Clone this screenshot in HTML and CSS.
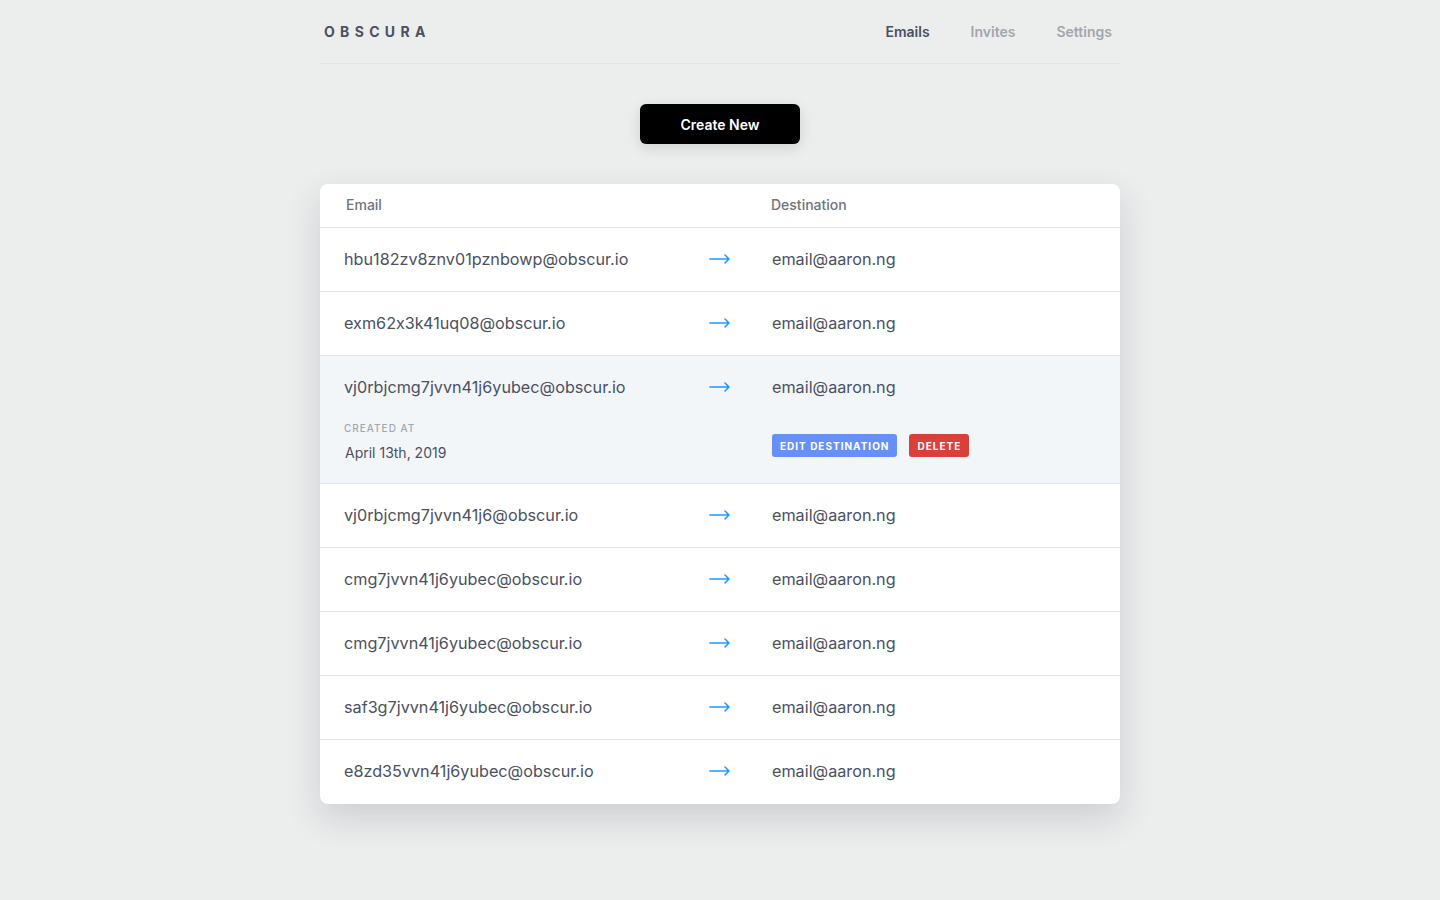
FILE: index.html
```html
<!DOCTYPE html>
<html lang="en">
<head>
    <meta charset="UTF-8">
    <meta name="viewport" content="width=device-width, initial-scale=1.0">
    <title>Obscura</title>
    <link rel="stylesheet" href="styles.css">
</head>
<body>
    <div class="container">
        <header class="header">
            <div class="logo">OBSCURA</div>
            <nav class="nav">
                <a class="nav-link active" href="#">Emails</a>
                <a class="nav-link" href="#">Invites</a>
                <a class="nav-link" href="#">Settings</a>
            </nav>
        </header>

        <div class="actions">
            <button class="create-button">Create New</button>
        </div>

        <div class="card">
            <div class="table-head">
                <div class="col-email">Email</div>
                <div class="col-arrow"></div>
                <div class="col-dest">Destination</div>
            </div>

            <div class="row">
                <div class="row-main">
                    <div class="col-email">hbu182zv8znv01pznbowp@obscur.io</div>
                    <div class="col-arrow"><svg class="arrow" viewBox="0 0 20 12"><path d="M0 6H19M15 2L19 6L15 10"/></svg></div>
                    <div class="col-dest">email@aaron.ng</div>
                </div>
            </div>
            <div class="row">
                <div class="row-main">
                    <div class="col-email">exm62x3k41uq08@obscur.io</div>
                    <div class="col-arrow"><svg class="arrow" viewBox="0 0 20 12"><path d="M0 6H19M15 2L19 6L15 10"/></svg></div>
                    <div class="col-dest">email@aaron.ng</div>
                </div>
            </div>
            <div class="row expanded">
                <div class="row-main">
                    <div class="col-email">vj0rbjcmg7jvvn41j6yubec@obscur.io</div>
                    <div class="col-arrow"><svg class="arrow" viewBox="0 0 20 12"><path d="M0 6H19M15 2L19 6L15 10"/></svg></div>
                    <div class="col-dest">email@aaron.ng</div>
                </div>
                <div class="row-details">
                    <div class="col-email">
                        <div class="detail-label">Created at</div>
                        <div class="detail-value">April 13th, 2019</div>
                    </div>
                    <div class="col-arrow"></div>
                    <div class="col-dest detail-buttons">
                        <button class="small-button edit">Edit destination</button>
                        <button class="small-button delete">Delete</button>
                    </div>
                </div>
            </div>
            <div class="row">
                <div class="row-main">
                    <div class="col-email">vj0rbjcmg7jvvn41j6@obscur.io</div>
                    <div class="col-arrow"><svg class="arrow" viewBox="0 0 20 12"><path d="M0 6H19M15 2L19 6L15 10"/></svg></div>
                    <div class="col-dest">email@aaron.ng</div>
                </div>
            </div>
            <div class="row">
                <div class="row-main">
                    <div class="col-email">cmg7jvvn41j6yubec@obscur.io</div>
                    <div class="col-arrow"><svg class="arrow" viewBox="0 0 20 12"><path d="M0 6H19M15 2L19 6L15 10"/></svg></div>
                    <div class="col-dest">email@aaron.ng</div>
                </div>
            </div>
            <div class="row">
                <div class="row-main">
                    <div class="col-email">cmg7jvvn41j6yubec@obscur.io</div>
                    <div class="col-arrow"><svg class="arrow" viewBox="0 0 20 12"><path d="M0 6H19M15 2L19 6L15 10"/></svg></div>
                    <div class="col-dest">email@aaron.ng</div>
                </div>
            </div>
            <div class="row">
                <div class="row-main">
                    <div class="col-email">saf3g7jvvn41j6yubec@obscur.io</div>
                    <div class="col-arrow"><svg class="arrow" viewBox="0 0 20 12"><path d="M0 6H19M15 2L19 6L15 10"/></svg></div>
                    <div class="col-dest">email@aaron.ng</div>
                </div>
            </div>
            <div class="row">
                <div class="row-main">
                    <div class="col-email">e8zd35vvn41j6yubec@obscur.io</div>
                    <div class="col-arrow"><svg class="arrow" viewBox="0 0 20 12"><path d="M0 6H19M15 2L19 6L15 10"/></svg></div>
                    <div class="col-dest">email@aaron.ng</div>
                </div>
            </div>
        </div>
    </div>
</body>
</html>
```

FILE: styles.css
```css
body {
    font-family: Inter, 'Noto Sans', sans-serif;
    font-feature-settings: "calt" 0;
    margin: 0;
    background-color: #eceded;
    color: #4a5160;
}
.container {
    width: 800px;
    margin: 0 auto;
    padding-bottom: 96px;
}
.header {
    display: flex;
    align-items: center;
    justify-content: space-between;
    height: 63px;
    border-bottom: 1px solid #e1e3ea;
}
.logo {
    padding-left: 4px;
    font-size: 14px;
    font-weight: 700;
    letter-spacing: 0.38em;
    color: #4a5160;
}
.nav {
    display: flex;
    gap: 41px;
    padding-right: 8px;
}
.nav-link {
    font-size: 14px;
    font-weight: 600;
    color: #a2a6ae;
    text-decoration: none;
}
.nav-link.active {
    color: #4a5160;
}
.actions {
    display: flex;
    justify-content: center;
    padding: 40px 0;
}
.create-button {
    width: 160px;
    height: 40px;
    padding-bottom: 1px;
    background-color: #000;
    color: #fff;
    border: none;
    border-radius: 6px;
    font-family: inherit;
    font-size: 14px;
    font-weight: 600;
    box-shadow: 0 4px 14px rgba(0, 0, 0, 0.12);
    cursor: pointer;
}
.card {
    background-color: #fff;
    border-radius: 8px;
    box-shadow: 0 14px 34px rgba(40, 50, 70, 0.16);
    overflow: hidden;
}
.table-head,
.row-main,
.row-details {
    display: grid;
    grid-template-columns: 356px 40px 1fr;
    padding: 0 24px;
}
.col-dest {
    padding-left: 32px;
}
.table-head {
    height: 44px;
    padding-bottom: 3px;
    box-sizing: border-box;
    align-items: center;
    font-size: 14px;
    font-weight: 500;
    color: #6e737d;
    border-bottom: 1px solid #e3e5ea;
}
.table-head .col-email {
    padding-left: 2px;
}
.table-head .col-dest {
    padding-left: 31px;
}
.row {
    border-bottom: 1px solid #e3e5ea;
    font-size: 16.2px;
}
.row:last-child {
    border-bottom: 1px solid transparent;
}
.row-main {
    height: 63px;
    padding-bottom: 2px;
    box-sizing: border-box;
    align-items: center;
}
.col-arrow {
    display: flex;
    justify-content: center;
    align-items: center;
}
.arrow {
    width: 20px;
    height: 12px;
    fill: none;
    stroke: #1a9bfa;
    stroke-width: 1.6;
    stroke-linecap: round;
    stroke-linejoin: round;
    overflow: visible;
}
.row.expanded {
    background-color: #f3f6f9;
}
.row-details {
    height: 64px;
    align-items: start;
}
.detail-label {
    font-size: 10px;
    font-weight: 500;
    letter-spacing: 0.1em;
    text-transform: uppercase;
    color: #a2a6ae;
    margin-top: 3px;
}
.detail-value {
    font-size: 14px;
    margin-top: 10px;
    padding-left: 1px;
}
.detail-buttons {
    display: flex;
    gap: 12px;
    padding-top: 15px;
}
.small-button {
    height: 23px;
    padding: 0 8px;
    border: none;
    border-radius: 3px;
    color: #fff;
    font-family: inherit;
    font-size: 10px;
    font-weight: 700;
    letter-spacing: 0.1em;
    text-transform: uppercase;
    cursor: pointer;
}
.small-button.edit {
    background-color: #6690f7;
}
.small-button.delete {
    background-color: #d9403a;
}
```
